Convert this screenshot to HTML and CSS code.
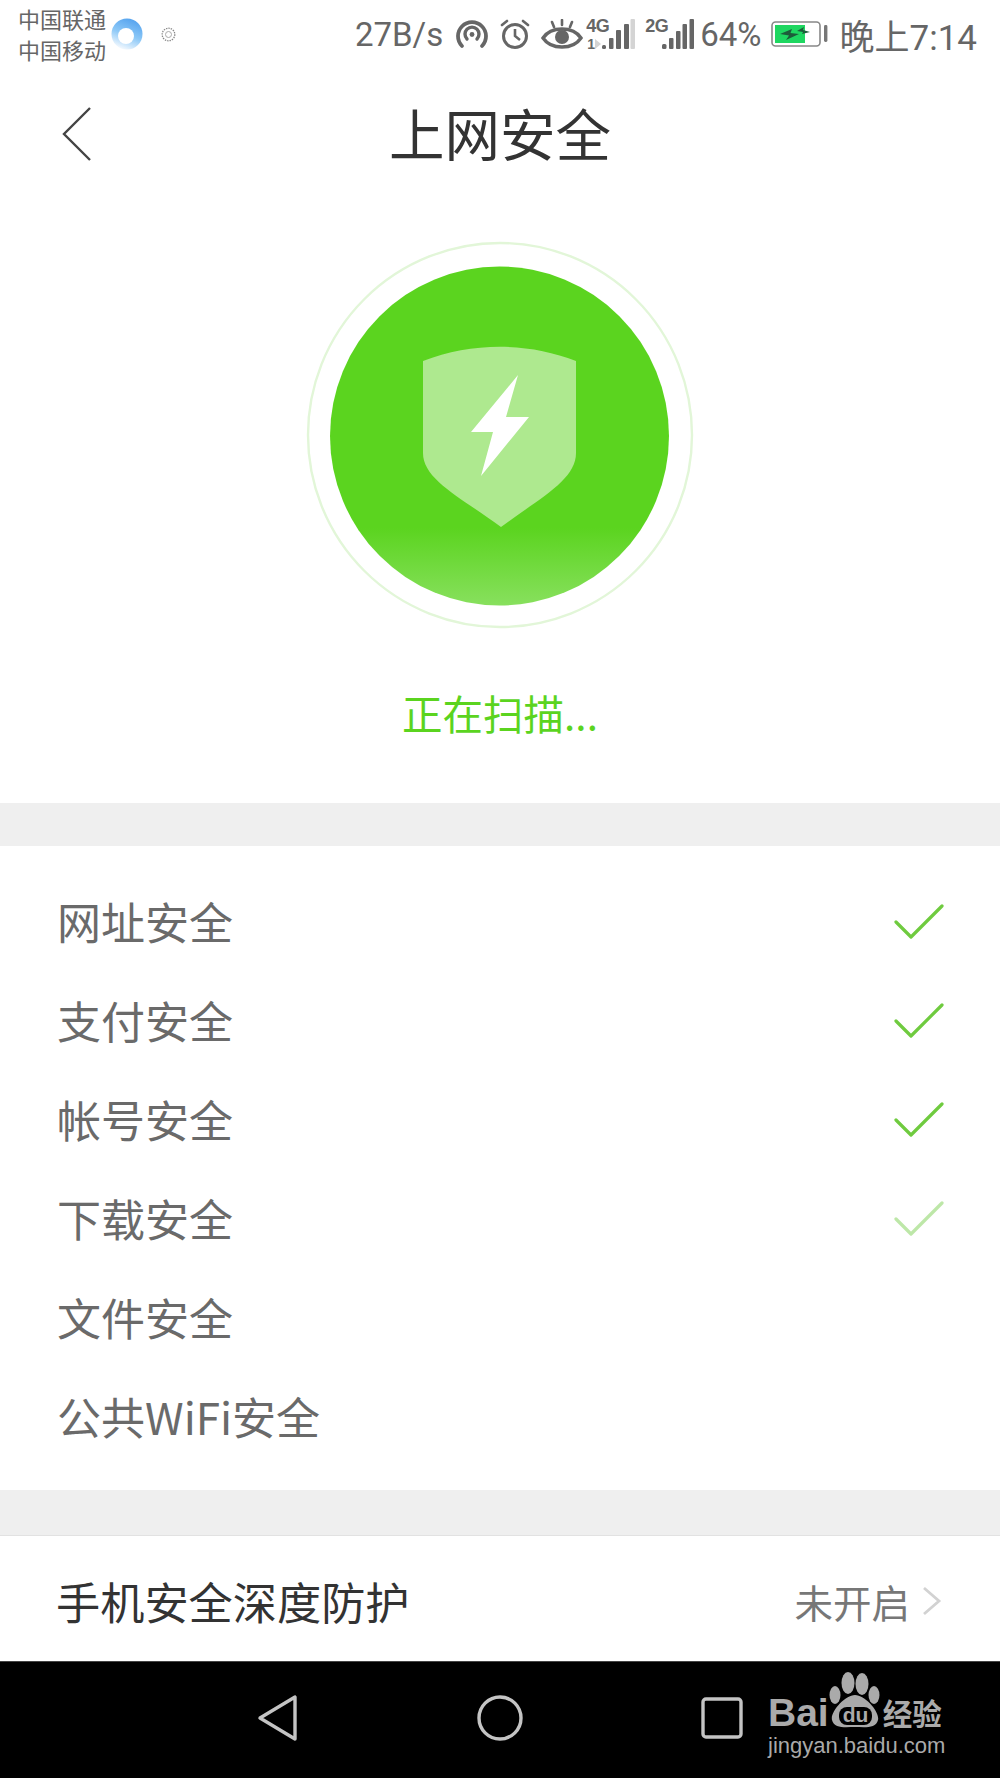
FILE: index.html
```html
<!DOCTYPE html>
<html lang="zh-CN">
<head>
  <meta charset="UTF-8" />
  <meta name="viewport" content="width=device-width, initial-scale=1.0" />
  <title>上网安全</title>
  <link rel="stylesheet" href="styles.css">
</head>
<body>
  <div class="screen">

    <!-- Status bar -->
    <div class="statusbar">
      <div class="carriers">
        <span>中国联通</span>
        <span>中国移动</span>
      </div>
      <svg class="app-icon" width="32" height="32" viewBox="0 0 32 32">
        <defs>
          <linearGradient id="appFade" x1="0.8" y1="0" x2="0.4" y2="1">
            <stop offset="0" stop-color="#4f9fee" />
            <stop offset="0.55" stop-color="#8cc8f7" />
            <stop offset="1" stop-color="#f2f8fe" />
          </linearGradient>
        </defs>
        <circle cx="16" cy="16" r="15.5" fill="url(#appFade)" />
        <circle cx="15" cy="18" r="8" fill="#fff" />
      </svg>
      <svg class="gear-icon" width="15" height="15" viewBox="0 0 15 15">
        <circle cx="7.5" cy="7.5" r="6.3" fill="none" stroke="#888" stroke-width="1.3" stroke-dasharray="1.4 1" />
        <circle cx="7.5" cy="7.5" r="3" fill="none" stroke="#aaa" stroke-width="1" />
      </svg>

      <div class="status-right">
        <span class="speed">27B/s</span>
        <svg class="ic-hotspot" width="34" height="30" viewBox="0 0 34 30">
          <path d="M7 27 A14 14 0 1 1 27 27" fill="none" stroke="#666" stroke-width="3.8" stroke-linecap="round" />
          <path d="M12 20 A7 7 0 1 1 22 20" fill="none" stroke="#666" stroke-width="3.4" stroke-linecap="round" />
          <circle cx="17" cy="15.5" r="2.4" fill="#666" />
        </svg>
        <svg class="ic-alarm" width="30" height="30" viewBox="0 0 30 30">
          <circle cx="15" cy="17" r="11.5" fill="none" stroke="#666" stroke-width="3" />
          <path d="M15 10 V17 L20 21" fill="none" stroke="#666" stroke-width="2.6" />
          <path d="M2 6 L7 2 M28 6 L23 2" fill="none" stroke="#666" stroke-width="2.6" stroke-linecap="round" />
        </svg>
        <svg class="ic-eye" width="44" height="30" viewBox="0 0 44 30">
          <path d="M3 19 C11 7 33 7 41 19 C33 31 11 31 3 19 Z" fill="none" stroke="#666" stroke-width="3.4" />
          <circle cx="22" cy="18" r="7" fill="#666" />
          <path d="M22 1 V6 M12 3 L14 8 M32 3 L30 8" fill="none" stroke="#666" stroke-width="2.6" stroke-linecap="round" />
        </svg>
        <div class="net">
          <span class="net-label">4G</span>
          <span class="net-sub">1</span>
          <svg width="49" height="30" viewBox="0 0 49 30">
            <path d="M9 20 L15 25 L9 30 Z" fill="#d4d4d4" />
            <rect x="16" y="26" width="4" height="4" rx="1.500" fill="#666" />
            <rect x="23" y="19" width="4.500" height="11" rx="1" fill="#666" />
            <rect x="30" y="11" width="5" height="19" rx="1" fill="#666" />
            <rect x="38" y="5" width="5" height="25" rx="1" fill="#666" />
            <rect x="44.500" y="0" width="4.500" height="30" rx="1" fill="#d4d4d4" />
          </svg>
        </div>
        <div class="net net-2g">
          <span class="net-label">2G</span>
          <svg width="49" height="30" viewBox="0 0 49 30">
            <rect x="17" y="25" width="4.500" height="5" rx="1.500" fill="#666" />
            <rect x="24" y="19" width="4.500" height="11" rx="1" fill="#666" />
            <rect x="31" y="12" width="4.500" height="18" rx="1" fill="#666" />
            <rect x="37.500" y="5" width="4.500" height="25" rx="1" fill="#666" />
            <rect x="44.500" y="0" width="4.500" height="30" rx="1" fill="#666" />
          </svg>
        </div>
        <span class="battery-pct">64%</span>
        <svg class="ic-battery" width="57" height="28" viewBox="0 0 57 28">
          <rect x="1" y="2" width="48" height="24" rx="3.5" fill="none" stroke="#888" stroke-width="1.6" />
          <rect x="4" y="5" width="30" height="18" fill="#1ed760" />
          <path d="M9 14 L21 9 L19.500 13 L28 14 L15 20 L18 15.500 Z" fill="#1d5c3a" />
          <path d="M26 11 L33 7 L32 10 L39 12 L31 14 L32 12 Z" fill="#1d5c3a" />
          <rect x="53" y="5" width="3.4" height="17" rx="1.4" fill="#777" />
        </svg>
        <span class="clock">晚上7:14</span>
      </div>
    </div>

    <!-- Title -->
    <div class="titlebar">
      <svg class="back" width="30" height="56" viewBox="0 0 30 56">
        <path d="M28 2 L2 28 L28 54" fill="none" stroke="#444" stroke-width="2.4" />
      </svg>
      <h1>上网安全</h1>
    </div>

    <!-- Scan circle -->
    <div class="hero">
      <svg class="scan" width="400" height="400" viewBox="300 235 400 400">
        <defs>
          <linearGradient id="discFill" x1="0" y1="266" x2="0" y2="606" gradientUnits="userSpaceOnUse">
            <stop offset="0" stop-color="#5bd41f" />
            <stop offset="0.77" stop-color="#5bd41f" />
            <stop offset="1" stop-color="#88e05e" />
          </linearGradient>
        </defs>
        <circle cx="500" cy="435" r="192" fill="none" stroke="#e2f6d8" stroke-width="2.4" />
        <circle cx="499.500" cy="436" r="169.500" fill="url(#discFill)" />
        <path d="M423 361 C472 342 528 342 576 361 V453 C576 480 540 498 501 527 C462 498 423 480 423 453 Z" fill="#aee98f" />
        <path d="M518 375 L506 417 L529 417 L481 476 L493 432 L471 432 Z" fill="#fff" />
      </svg>
      <div class="scan-label">正在扫描...</div>
    </div>

    <div class="band"></div>

    <!-- Scan items -->
    <ul class="checks">
      <li>网址安全
        <svg width="50" height="36" viewBox="0 0 50 36"><path d="M2 18 L17 33 L48 2" fill="none" stroke="#6fcb3f" stroke-width="3.2" stroke-linecap="round" stroke-linejoin="round" /></svg>
      </li>
      <li>支付安全
        <svg width="50" height="36" viewBox="0 0 50 36"><path d="M2 18 L17 33 L48 2" fill="none" stroke="#6fcb3f" stroke-width="3.2" stroke-linecap="round" stroke-linejoin="round" /></svg>
      </li>
      <li>帐号安全
        <svg width="50" height="36" viewBox="0 0 50 36"><path d="M2 18 L17 33 L48 2" fill="none" stroke="#6fcb3f" stroke-width="3.2" stroke-linecap="round" stroke-linejoin="round" /></svg>
      </li>
      <li>下载安全
        <svg class="fading" width="50" height="36" viewBox="0 0 50 36"><path d="M2 18 L17 33 L48 2" fill="none" stroke="#6fcb3f" stroke-width="3.2" stroke-linecap="round" stroke-linejoin="round" /></svg>
      </li>
      <li>文件安全</li>
      <li>公共WiFi安全</li>
    </ul>

    <div class="band band-line"></div>

    <!-- Deep protection -->
    <div class="protect">
      <span class="protect-name">手机安全深度防护</span>
      <span class="protect-state">未开启</span>
      <svg width="20" height="30" viewBox="0 0 20 30">
        <path d="M2 2 L17 15 L2 28" fill="none" stroke="#d2d2d2" stroke-width="2.8" />
      </svg>
    </div>

    <!-- Nav bar -->
    <div class="navbar">
      <svg class="nav-back" width="42" height="48" viewBox="0 0 42 48">
        <path d="M38 3 V45 L3 24 Z" fill="none" stroke="#c4c4c4" stroke-width="3.4" stroke-linejoin="round" />
      </svg>
      <svg class="nav-home" width="46" height="46" viewBox="0 0 46 46">
        <circle cx="23" cy="23" r="21" fill="none" stroke="#c4c4c4" stroke-width="3.4" />
      </svg>
      <svg class="nav-recent" width="42" height="42" viewBox="0 0 42 42">
        <rect x="2" y="2" width="38" height="38" rx="3" fill="none" stroke="#c4c4c4" stroke-width="3.4" />
      </svg>

      <div class="watermark">
        <div class="wm-top">
          <span class="wm-bai">Bai</span>
          <svg class="wm-paw" width="52" height="56" viewBox="0 0 52 56">
            <ellipse cx="19" cy="11" rx="6.500" ry="11" fill="#aaa" />
            <ellipse cx="33" cy="12" rx="6.500" ry="11" fill="#aaa" />
            <ellipse cx="6" cy="23" rx="5.500" ry="9" fill="#aaa" />
            <ellipse cx="45" cy="23" rx="5.500" ry="9" fill="#aaa" />
            <path d="M26 23 C36 23 51 40 49 48 C47 57 35 55 26 55 C17 55 5 57 3 48 C1 40 16 23 26 23 Z" fill="#aaa" />
            <rect x="10" y="35" width="33" height="18" rx="8" fill="#000" />
            <text x="26.500" y="50" text-anchor="middle" class="wm-du">du</text>
          </svg>
          <span class="wm-cn">经验</span>
        </div>
        <div class="wm-url">jingyan.baidu.com</div>
      </div>
    </div>

  </div>
</body>
</html>
```

FILE: styles.css
```css
/* General */
body {
  margin: 0;
  padding: 0;
  background-color: #000;
  font-family: "Noto Sans CJK SC", Roboto, sans-serif;
}

.screen {
  width: 1000px;
  height: 1778px;
  display: flex;
  flex-direction: column;
  background-color: #fff;
  overflow: hidden;
}

svg {
  display: block;
  flex: none;
}

/* Status bar */
.statusbar {
  height: 68px;
  display: flex;
  align-items: center;
  padding: 0 23px 0 18px;
  color: #666;
}

.carriers {
  display: flex;
  flex-direction: column;
  width: 88px;
  font-size: 22px;
  line-height: 31px;
  white-space: nowrap;
  color: #666;
}

.app-icon {
  margin: 0 0 0 5px;
}

.gear-icon {
  margin-left: 18px;
}

.status-right {
  margin-left: auto;
  display: flex;
  align-items: center;
  font-family: Roboto, "Noto Sans CJK SC", sans-serif;
  font-size: 33px;
}

.speed {
  margin-right: 12px;
}

.ic-alarm {
  margin-left: 11px;
}

.ic-eye {
  margin-left: 10px;
}

.net {
  position: relative;
  margin-left: 2px;
  width: 49px;
  height: 30px;
}

.net-2g {
  margin-left: 10px;
}

.net-label {
  position: absolute;
  left: 0;
  top: -1px;
  font-family: "Liberation Sans Narrow", "Liberation Sans", sans-serif;
  font-size: 18px;
  font-weight: bold;
  line-height: 16px;
  letter-spacing: -0.5px;
}

.net-sub {
  position: absolute;
  left: 1px;
  top: 19px;
  font-family: "Liberation Sans Narrow", "Liberation Sans", sans-serif;
  font-size: 14px;
  font-weight: bold;
  line-height: 12px;
}

.battery-pct {
  margin-left: 6px;
}

.ic-battery {
  margin-left: 9px;
}

.clock {
  margin-left: 12px;
  font-size: 35px;
}

/* Title */
.titlebar {
  height: 136px;
  padding-left: 62px;
  position: relative;
  display: flex;
  align-items: center;
}

.back {
  margin-top: -5px;
}

.titlebar h1 {
  position: absolute;
  left: 0;
  right: 0;
  top: 26px;
  margin: 0;
  text-align: center;
  font-size: 55.5px;
  font-weight: normal;
  line-height: 76px;
  color: #333;
}

/* Scan circle */
.hero {
  padding: 31px 0 60px;
  display: flex;
  flex-direction: column;
  align-items: center;
}

.scan-label {
  margin-top: 48px;
  font-size: 40.5px;
  line-height: 60px;
  color: #5bd41f;
}

.band {
  height: 43px;
  background-color: #efefef;
}

.band-line {
  height: 45px;
  border-bottom: 1px solid #e2e2e2;
}

/* Scan items */
.checks {
  list-style: none;
  margin: 0;
  padding: 25px 56px 25px 57px;
}

.checks li {
  height: 99px;
  display: flex;
  align-items: center;
  justify-content: space-between;
  font-size: 44px;
  color: #6a6a6a;
}

.checks svg {
  margin-top: 2px;
}

.checks .fading {
  opacity: 0.45;
}

/* Deep protection */
.protect {
  height: 121px;
  padding: 4px 58px 0 56px;
  display: flex;
  align-items: center;
}

.protect-name {
  font-size: 44.2px;
  color: #333;
  flex: 1;
}

.protect-state {
  font-size: 38.5px;
  color: #777;
  margin-right: 12px;
}

/* Nav bar */
.navbar {
  flex: 1;
  position: relative;
  display: flex;
  align-items: center;
  background-color: #000;
  border-top: 1px solid #444;
  padding-left: 257px;
}

.navbar svg.nav-back,
.navbar svg.nav-home,
.navbar svg.nav-recent {
  margin-top: -4px;
}

.nav-home {
  margin-left: 178px;
}

.nav-recent {
  margin-left: 178px;
}

.watermark {
  position: absolute;
  left: 768px;
  top: 10px;
  width: 180px;
  color: #aaa;
}

.wm-top {
  display: flex;
  align-items: flex-end;
  height: 56px;
}

.wm-bai {
  font-family: "Liberation Sans", sans-serif;
  font-size: 39px;
  font-weight: bold;
  line-height: 30px;
}

.wm-du {
  font-family: "Liberation Sans", sans-serif;
  font-size: 21px;
  font-weight: bold;
  fill: #aaa;
}

.wm-cn {
  font-size: 29.5px;
  font-weight: bold;
  line-height: 31px;
  margin-left: 2px;
  white-space: nowrap;
}

.wm-url {
  font-family: "Liberation Sans", sans-serif;
  font-size: 22px;
  line-height: 26px;
  margin-top: 5px;
  white-space: nowrap;
}
```
